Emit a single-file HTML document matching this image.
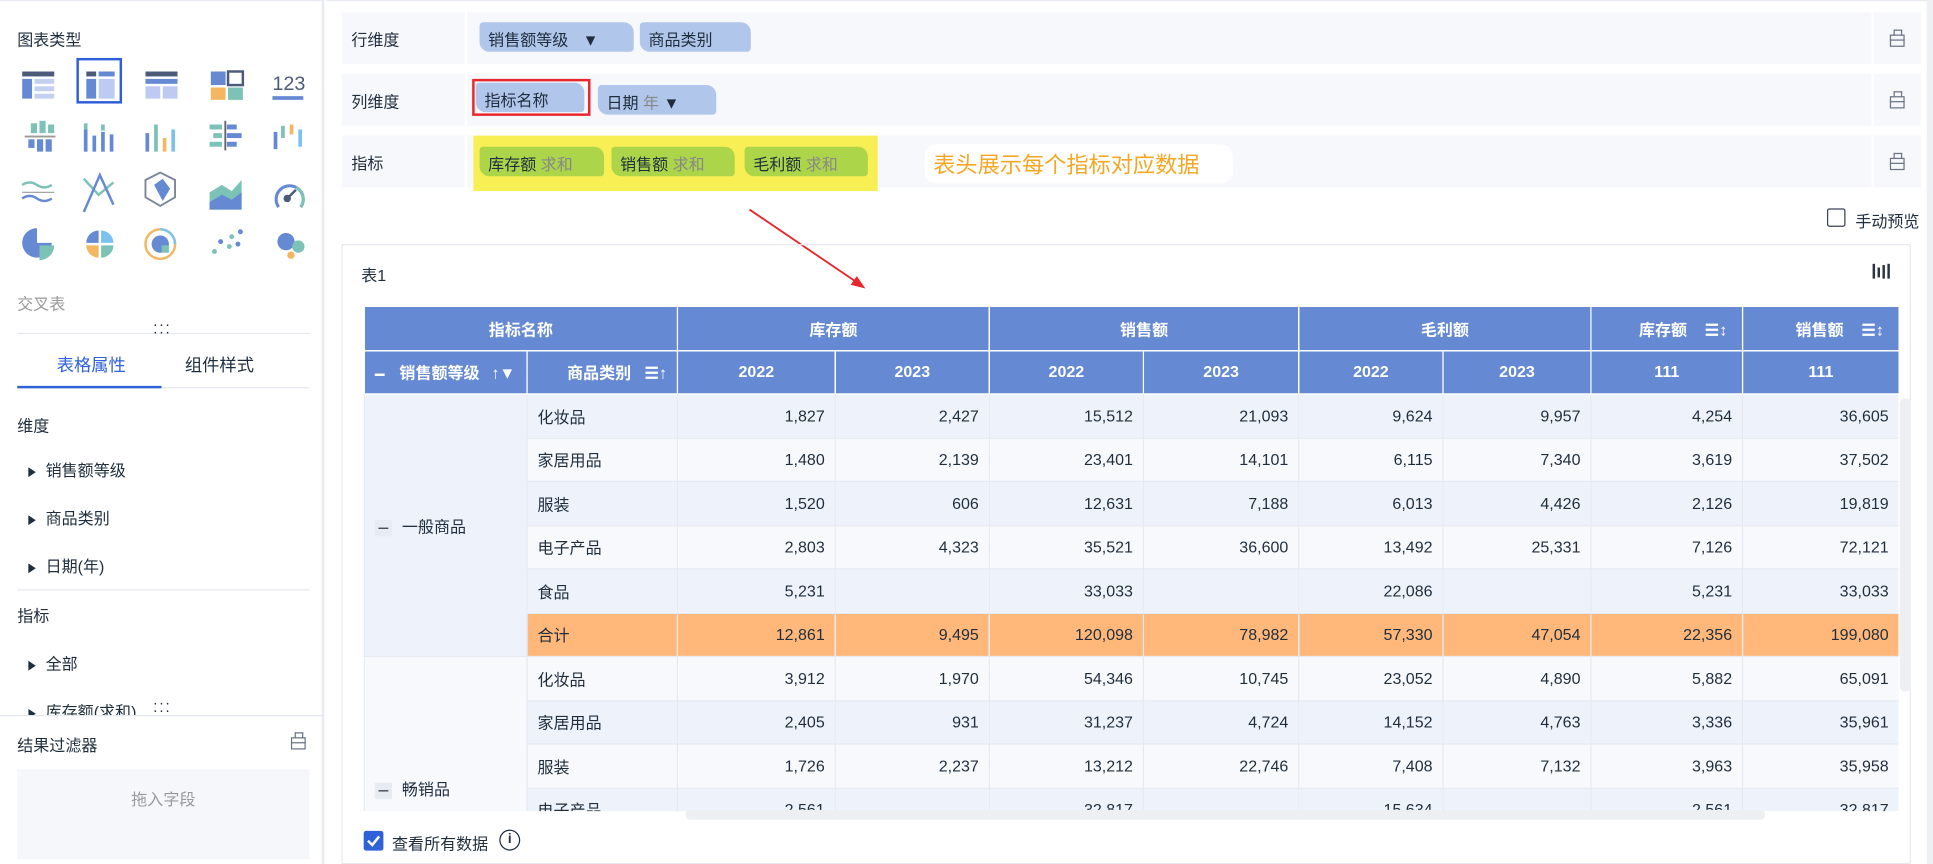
<!DOCTYPE html>
<html><head><meta charset="utf-8"><style>
*{box-sizing:border-box;margin:0;padding:0}
html,body{width:1933px;height:864px;overflow:hidden;background:#fff}
#s{position:absolute;left:0;top:0;width:1568px;height:701px;overflow:hidden;transform:scale(1.23278);transform-origin:0 0;font-family:"Liberation Sans","Noto Sans CJK SC",sans-serif;font-size:13px;color:#1f2d3d}
.a{position:absolute}
.row{position:absolute;left:277px;width:1241px;height:42px;background:#f7f8fc}
.ib{position:absolute;left:1520px;width:38px;height:42px;background:#f7f8fc}
.lbl{position:absolute;left:8px;top:12px}
.chip{position:absolute;height:24px;background:#b0c6ea;border-radius:3px 8px 3px 8px;padding:4px 7px;white-space:nowrap}
.g{background:#acd54a}
.muted{color:#888}
.ico{position:absolute;width:12px;height:10px;border:1.5px solid #6b7486}
.ico:before{content:"";position:absolute;left:2px;top:-5px;width:5px;height:4px;border:1.5px solid #6b7486;border-bottom:none}
.ico:after{content:"";position:absolute;left:-1px;top:3px;width:12px;height:0;border-top:1.5px solid #6b7486}
table{border-collapse:collapse;table-layout:fixed}
td,th{border:1px solid #e5e9f2;height:35.5px;padding:0 8px;white-space:nowrap;overflow:hidden}
th{background:#6589d3;color:#fff;font-weight:bold;border:1px solid #fff;text-align:center}
td{text-align:right}
td.t{text-align:left}
tr.d td{background:#eef3fb}
tr.l td{background:#f7f9fd}
tr.o td{background:#ffb879}
td.gp{text-align:left;vertical-align:middle}
.mn{display:inline-block;width:14px;height:13px;background:#e7ebf2;vertical-align:middle;margin-right:8px;position:relative}
.mn:after{content:"";position:absolute;left:3px;top:6px;width:8px;height:1.5px;background:#334}
.tri{display:inline-block;width:0;height:0;border-left:6px solid #1f2d3d;border-top:4.5px solid transparent;border-bottom:4.5px solid transparent;margin-right:8px;vertical-align:middle}
</style></head><body><div id="s">
<div class="a" style="left:0;top:0;width:263px;height:701px;border-right:2px solid #e8ebf2;border-top:1px solid #e8ebf2"></div>
<div class="a" style="left:14px;top:22px">图表类型</div>
<svg class="a" style="left:0;top:40px" width="262" height="180">
<g>
<rect x="18" y="18" width="26" height="4" fill="#4c5b7a"/><rect x="18" y="24" width="8" height="16" fill="#6589d3"/><rect x="28" y="24" width="16" height="4" fill="#c4d0f0"/><rect x="28" y="30" width="16" height="4" fill="#c4d0f0"/><rect x="28" y="36" width="16" height="4" fill="#c4d0f0"/>
<rect x="63" y="8" width="35" height="35" fill="#fff" stroke="#2f5fd8" stroke-width="2"/>
<rect x="70" y="18" width="8" height="4" fill="#4c5b7a"/><rect x="80" y="18" width="13" height="4" fill="#6589d3"/><rect x="70" y="24" width="8" height="16" fill="#6589d3"/><rect x="80" y="24" width="13" height="16" fill="#bdcbf2"/>
<rect x="118" y="18" width="26" height="4" fill="#4c5b7a"/><rect x="118" y="24" width="26" height="4" fill="#6589d3"/><rect x="118" y="30" width="12" height="10" fill="#bdcbf2"/><rect x="132" y="30" width="12" height="10" fill="#bdcbf2"/>
<rect x="171" y="18" width="12" height="11" fill="#6589d3"/><rect x="185" y="18" width="12" height="11" fill="#fff" stroke="#4c5b7a" stroke-width="2"/><rect x="171" y="31" width="12" height="10" fill="#f3b661"/><rect x="185" y="31" width="12" height="10" fill="#7cc2b6"/>
<text x="221" y="33" font-size="16" fill="#4c5b7a" font-family="Liberation Sans">123</text><rect x="221" y="38" width="25" height="3" fill="#6589d3"/>
</g>
<g fill="#6589d3" transform="translate(0,-25)">
<g><rect x="25" y="85" width="5" height="8" fill="#7cc2b6"/><rect x="32" y="83" width="5" height="10" fill="#7cc2b6"/><rect x="39" y="86" width="5" height="7" fill="#7cc2b6"/><rect x="20" y="95" width="25" height="1.5" fill="#999"/><rect x="23" y="98" width="5" height="7"/><rect x="30" y="98" width="5" height="10"/><rect x="37" y="98" width="5" height="10"/></g>
<g transform="translate(-19,0)"><rect x="87" y="90" width="3" height="18"/><rect x="94" y="95" width="3" height="13"/><rect x="101" y="92" width="3" height="16"/><rect x="108" y="94" width="3" height="14"/><rect x="87" y="85" width="3" height="5" fill="#7cc2b6"/><rect x="101" y="86" width="3" height="5" fill="#7cc2b6"/></g>
<g transform="translate(-31,0)"><rect x="149" y="93" width="3" height="15"/><rect x="156" y="86" width="3" height="22" fill="#7cc2b6"/><rect x="163" y="97" width="3" height="11" fill="#f3b661"/><rect x="170" y="90" width="3" height="18" fill="#7cc2ee"/></g>
<g transform="translate(-42,0)"><rect x="212" y="86" width="10" height="4" fill="#7cc2b6"/><rect x="226" y="86" width="8" height="4"/><rect x="215" y="93" width="7" height="4" fill="#7cc2b6"/><rect x="226" y="93" width="12" height="4"/><rect x="212" y="100" width="10" height="4" fill="#7cc2b6"/><rect x="226" y="100" width="8" height="4"/><rect x="224" y="83" width="1.5" height="24" fill="#666"/></g>
<g transform="translate(-54,0)"><rect x="276" y="92" width="3" height="14"/><rect x="282" y="87" width="3" height="10" fill="#7cc2b6"/><rect x="289" y="86" width="3" height="8" fill="#f3b661"/><rect x="296" y="90" width="3" height="14" fill="#7cc2ee"/></g>
</g>
<g transform="translate(0,-30)">
<g fill="none" stroke-width="2">
<path d="M18 140 q6 -4 12 0 t12 0" stroke="#7cc2b6"/><path d="M18 151 q6 -4 12 0 t12 0" stroke="#6589d3"/><line x1="18" y1="146" x2="44" y2="146" stroke="#999" stroke-width="1"/>
<g transform="translate(-20,0)"><path d="M88 135 L100 148 L112 138" stroke="#7cc2b6"/><path d="M88 162 L101 132 L112 156" stroke="#6589d3"/></g>
<polygon points="130,130 142,136 142,150 130,157 118,150 118,136" stroke="#7a849a" stroke-width="1.5"/><polygon points="125,140 132,135 138,143 132,153" fill="#6589d3" stroke="none"/>
</g>
<polygon points="170,146 180,140 188,145 196,136 196,160 170,160" fill="#7cc2b6"/><polygon points="170,154 180,148 188,152 196,146 196,160 170,160" fill="#6589d3"/>
<path d="M226 158 a11 11 0 1 1 18 0" fill="none" stroke="#6589d3" stroke-width="2.5"/><path d="M240 142 a11 11 0 0 1 4 16" fill="none" stroke="#7cc2b6" stroke-width="2.5"/><circle cx="233" cy="151" r="3" fill="#4c5b7a"/><line x1="233" y1="151" x2="240" y2="144" stroke="#4c5b7a" stroke-width="2"/>
</g>
<g transform="translate(0,-40)">
<path d="M30 185 A12 12 0 1 0 42 197 L30 197 Z" fill="#6589d3"/><path d="M32 199 h12 a12 12 0 0 1 -12 12 Z" fill="#7cc2b6"/>
<path d="M80 187 a10 10 0 0 0 -10 10 h10z" fill="#6589d3"/><path d="M82 187 a10 10 0 0 1 10 10 h-10z" fill="#7cc2ee"/><path d="M70 199 a10 10 0 0 0 10 10 v-10z" fill="#f3b661"/><path d="M92 199 a10 10 0 0 1 -10 10 v-10z" fill="#7cc2b6"/>
<circle cx="130" cy="198" r="12" fill="none" stroke="#f3b661" stroke-width="2"/><path d="M130 186 a12 12 0 0 1 12 12" fill="none" stroke="#7cc2ee" stroke-width="2"/><circle cx="130" cy="198" r="7" fill="#6589d3"/><rect x="131" y="199" width="6" height="6" fill="#7cc2b6"/>
<circle cx="174" cy="204" r="2" fill="#7cc2b6"/><circle cx="179" cy="196" r="2" fill="#6589d3"/><circle cx="186" cy="200" r="2" fill="#7cc2b6"/><circle cx="188" cy="192" r="2" fill="#7cc2b6"/><circle cx="193" cy="198" r="2" fill="#6589d3"/><circle cx="195" cy="188" r="2" fill="#6589d3"/>
<circle cx="232" cy="196" r="7" fill="#6589d3"/><circle cx="242" cy="200" r="5" fill="#7cc2b6"/><circle cx="236" cy="207" r="3" fill="#f3b661"/>
</g>
</svg>
<div class="a" style="left:14px;top:236px;color:#999">交叉表</div>
<div class="a" style="left:14px;top:270px;width:237px;border-top:1px solid #e6e8ef"></div>
<div class="a" style="left:124px;top:260px;font-size:12px;letter-spacing:1px;line-height:6px">···<br>···</div>
<div class="a" style="left:46px;top:286px;color:#2f62d8;font-size:14px">表格属性</div>
<div class="a" style="left:150px;top:286px;font-size:14px">组件样式</div>
<div class="a" style="left:14px;top:314px;width:237px;border-top:1px solid #e6e8ef"></div>
<div class="a" style="left:14px;top:313px;width:117px;height:2px;background:#2f62d8"></div>
<div class="a" style="left:14px;top:335px">维度</div>
<div class="a" style="left:23px;top:371px"><span class="tri"></span>销售额等级</div>
<div class="a" style="left:23px;top:410px"><span class="tri"></span>商品类别</div>
<div class="a" style="left:23px;top:449px"><span class="tri"></span>日期(年)</div>
<div class="a" style="left:14px;top:478px;width:237px;border-top:1px solid #e6e8ef"></div>
<div class="a" style="left:14px;top:489px">指标</div>
<div class="a" style="left:23px;top:528px"><span class="tri"></span>全部</div>
<div class="a" style="left:23px;top:567px;height:13px;overflow:hidden"><span class="tri"></span>库存额(求和)</div>
<div class="a" style="left:0;top:580px;width:263px;border-top:1px solid #e6e8ef"></div>
<div class="a" style="left:124px;top:567px;font-size:12px;letter-spacing:1px;line-height:6px">···<br>···</div>
<div class="a" style="left:14px;top:594px">结果过滤器</div>
<div class="ico" style="left:236px;top:598px"></div>
<div class="a" style="left:14px;top:624px;width:237px;height:73px;background:#f6f7fb;color:#999;text-align:center;padding-top:14px">拖入字段</div>

<div class="a" style="left:265px;top:0;width:1303px;border-top:1px solid #e8ebf2"></div>
<div class="a" style="left:1563px;top:0;width:5px;height:701px;background:#eef0f4"></div>
<div class="row" style="top:10px"><span class="lbl">行维度</span><div class="a" style="left:100px;top:0;width:2px;height:42px;background:#fff"></div></div>
<div class="ib" style="top:10px"><div class="ico" style="left:13px;top:18px"></div></div>
<div class="row" style="top:60px"><span class="lbl">列维度</span><div class="a" style="left:100px;top:0;width:2px;height:42px;background:#fff"></div></div>
<div class="ib" style="top:60px"><div class="ico" style="left:13px;top:18px"></div></div>
<div class="row" style="top:110px"><span class="lbl">指标</span><div class="a" style="left:100px;top:0;width:2px;height:42px;background:#fff"></div></div>
<div class="ib" style="top:110px"><div class="ico" style="left:13px;top:18px"></div></div>
<div class="chip" style="left:389px;top:18px;width:125px">销售额等级 <span style="margin-left:8px">▼</span></div>
<div class="chip" style="left:519px;top:18px;width:90px">商品类别</div>
<div class="a" style="left:383px;top:64px;width:96px;height:30px;border:2px solid #e8262b"></div>
<div class="chip" style="left:386px;top:67px;width:88px">指标名称</div>
<div class="chip" style="left:485px;top:69px;width:96px">日期 <span class="muted">年</span> ▼</div>
<div class="a" style="left:384px;top:110px;width:328px;height:45px;background:#f8ef54"></div>
<div class="chip g" style="left:389px;top:119px;width:101px">库存额 <span class="muted">求和</span></div>
<div class="chip g" style="left:496px;top:119px;width:100px">销售额 <span class="muted">求和</span></div>
<div class="chip g" style="left:604px;top:119px;width:100px">毛利额 <span class="muted">求和</span></div>
<div class="a" style="left:750px;top:117px;width:250px;height:32px;background:#fff;border-radius:10px;color:#f5a623;font-size:18px;padding:3px 7px">表头展示每个指标对应数据</div>
<svg class="a" style="left:600px;top:165px" width="110" height="75"><line x1="8" y1="5" x2="98" y2="66" stroke="#e8262b" stroke-width="1.5"/><polygon points="102,69 90,66 95,59" fill="#e8262b"/></svg>
<div class="a" style="left:1482px;top:169px;width:15px;height:15px;border:1px solid #3a4254;border-radius:2px"></div>
<div class="a" style="left:1505px;top:169px">手动预览</div>

<div class="a" style="left:277px;top:198px;width:1273px;height:503px;border:1px solid #e6e8ef"></div>
<div class="a" style="left:293px;top:213px">表1</div>
<svg class="a" style="left:1518px;top:212px" width="16" height="16"><rect x="1" y="2" width="2" height="12" fill="#2c3345"/><rect x="5" y="5" width="2" height="8" fill="#2c3345"/><rect x="9" y="3" width="2" height="11" fill="#2c3345"/><rect x="13" y="2" width="2" height="12" fill="#2c3345"/></svg>

<div class="a" style="left:295px;top:248px;width:1245px;height:410px;overflow:hidden">
<table style="width:1245px">
<colgroup><col style="width:132px"><col style="width:122px"><col style="width:128px"><col style="width:125px"><col style="width:125px"><col style="width:126px"><col style="width:117px"><col style="width:120px"><col style="width:123px"><col style="width:127px"></colgroup>
<tr><th colspan="2">指标名称</th><th colspan="2">库存额</th><th colspan="2">销售额</th><th colspan="2">毛利额</th><th style="text-align:right;padding-right:12px">库存额 &nbsp;&nbsp;&nbsp;☰↕</th><th style="text-align:right;padding-right:12px">销售额 &nbsp;&nbsp;&nbsp;☰↕</th></tr>
<tr><th style="text-align:left"><span style="display:inline-block;width:8px;height:2px;background:#fff;vertical-align:middle;margin-right:12px"></span>销售额等级 <span style="margin-left:6px">↑▼</span></th><th style="text-align:right">商品类别 &nbsp;&nbsp;☰↑</th><th>2022</th><th>2023</th><th>2022</th><th>2023</th><th>2022</th><th>2023</th><th>111</th><th>111</th></tr>
<tr class="d"><td class="gp" rowspan="6" style="background:#eef3fb"><span class="mn"></span>一般商品</td><td class="t">化妆品</td><td>1,827</td><td>2,427</td><td>15,512</td><td>21,093</td><td>9,624</td><td>9,957</td><td>4,254</td><td>36,605</td></tr>
<tr class="l"><td class="t">家居用品</td><td>1,480</td><td>2,139</td><td>23,401</td><td>14,101</td><td>6,115</td><td>7,340</td><td>3,619</td><td>37,502</td></tr>
<tr class="d"><td class="t">服装</td><td>1,520</td><td>606</td><td>12,631</td><td>7,188</td><td>6,013</td><td>4,426</td><td>2,126</td><td>19,819</td></tr>
<tr class="l"><td class="t">电子产品</td><td>2,803</td><td>4,323</td><td>35,521</td><td>36,600</td><td>13,492</td><td>25,331</td><td>7,126</td><td>72,121</td></tr>
<tr class="d"><td class="t">食品</td><td>5,231</td><td></td><td>33,033</td><td></td><td>22,086</td><td></td><td>5,231</td><td>33,033</td></tr>
<tr class="o"><td class="t">合计</td><td>12,861</td><td>9,495</td><td>120,098</td><td>78,982</td><td>57,330</td><td>47,054</td><td>22,356</td><td>199,080</td></tr>
<tr class="l"><td class="gp" rowspan="6" style="background:#f7f9fd"><span class="mn"></span>畅销品</td><td class="t">化妆品</td><td>3,912</td><td>1,970</td><td>54,346</td><td>10,745</td><td>23,052</td><td>4,890</td><td>5,882</td><td>65,091</td></tr>
<tr class="d"><td class="t">家居用品</td><td>2,405</td><td>931</td><td>31,237</td><td>4,724</td><td>14,152</td><td>4,763</td><td>3,336</td><td>35,961</td></tr>
<tr class="l"><td class="t">服装</td><td>1,726</td><td>2,237</td><td>13,212</td><td>22,746</td><td>7,408</td><td>7,132</td><td>3,963</td><td>35,958</td></tr>
<tr class="d"><td class="t">电子产品</td><td>2,561</td><td></td><td>32,817</td><td></td><td>15,634</td><td></td><td>2,561</td><td>32,817</td></tr>
<tr class="l"><td class="t">食品</td><td></td><td></td><td></td><td></td><td></td><td></td><td></td><td></td></tr>
<tr class="o"><td class="t">合计</td><td></td><td></td><td></td><td></td><td></td><td></td><td></td><td></td></tr>
</table></div>
<div class="a" style="left:1541px;top:323px;width:9px;height:238px;background:#eeeff2;border-radius:5px"></div>
<div class="a" style="left:556px;top:657px;width:876px;height:8px;background:#eeeff2;border-radius:4px"></div>
<div class="a" style="left:295px;top:674px;width:16px;height:16px;background:#2f62d8;border-radius:2px"><svg width="16" height="16"><path d="M3.5 8 L7 11.5 L12.5 4.5" fill="none" stroke="#fff" stroke-width="2"/></svg></div>
<div class="a" style="left:318px;top:674px">查看所有数据</div>
<div class="a" style="left:405px;top:673px;width:17px;height:17px;border:1.5px solid #1f2d3d;border-radius:50%;text-align:center;font-size:11px;line-height:14px;font-weight:bold">i</div>
</div></body></html>
